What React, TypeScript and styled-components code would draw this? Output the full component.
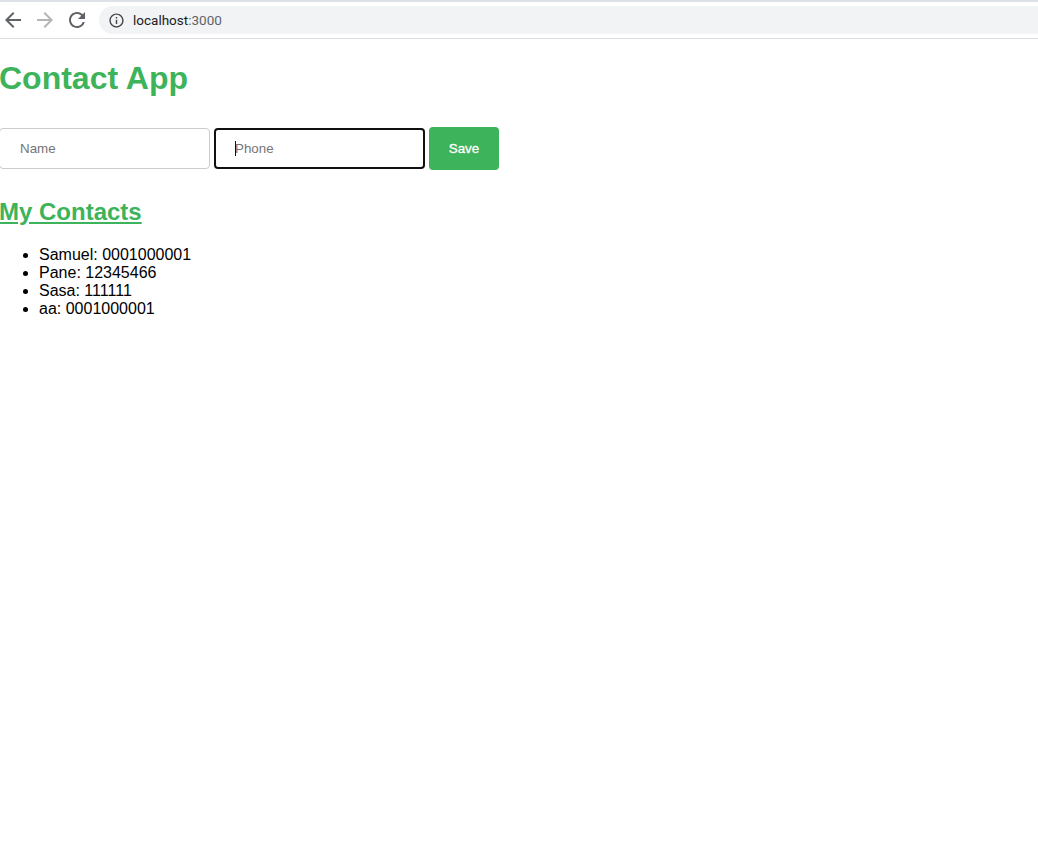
import React from 'react';
import styled, { createGlobalStyle } from 'styled-components';
import { MdArrowBack, MdArrowForward, MdRefresh, MdInfoOutline } from 'react-icons/md';

const GREEN = '#3db35b';

const GlobalStyle = createGlobalStyle`
  html, body {
    margin: 0;
    padding: 0;
    background: #ffffff;
    font-family: "Liberation Sans", Arial, sans-serif;
    overflow-x: hidden;
  }
`;

const TopStrip = styled.div`
  height: 2px;
  background: #dee1e6;
`;

const Toolbar = styled.div`
  height: 36px;
  display: flex;
  align-items: center;
  gap: 8px;
  border-bottom: 1px solid #dadce0;
  padding-left: 1px;
`;

const NavButton = styled.span<{ $disabled?: boolean }>`
  display: flex;
  color: ${(p) => (p.$disabled ? '#b3b5b8' : '#5f6368')};
`;

const Omnibox = styled.div`
  flex: 1;
  height: 28px;
  margin-left: 2px;
  display: flex;
  align-items: center;
  gap: 8px;
  padding-left: 9px;
  background: #f1f3f4;
  border-radius: 14px 0 0 14px;
  font-family: Roboto, sans-serif;
  font-size: 13.5px;
  color: #5f6368;
`;

const InfoIcon = styled.span`
  display: flex;
  color: #44474a;
`;

const Host = styled.span`
  color: #202124;
`;

const Page = styled.main`
  display: flex;
  flex-direction: column;
  align-items: flex-start;
  margin-left: -1px;
`;

const Title = styled.h1`
  margin: 21px 0 30px;
  font-size: 32px;
  line-height: 37px;
  font-weight: 700;
  color: ${GREEN};
`;

const Form = styled.form`
  display: flex;
  align-items: center;
  gap: 4px;
`;

const Field = styled.div`
  position: relative;
  display: flex;
`;

const Input = styled.input<{ $focused?: boolean }>`
  width: 211px;
  height: 41px;
  box-sizing: border-box;
  padding: 0 20px;
  border: 1px solid #ccc;
  border-radius: 4px;
  background: #fff;
  font-family: "Liberation Sans", Arial, sans-serif;
  font-size: 13.33px;
  outline: none;

  &::placeholder {
    color: #757575;
    opacity: 1;
  }

  ${(p) =>
    p.$focused &&
    `
    border: 2px solid #101010;
    padding: 0 19px;
  `}
`;

const Caret = styled.span`
  position: absolute;
  left: 21px;
  top: 13px;
  width: 1px;
  height: 15px;
  background: #101010;
`;

const SaveButton = styled.button`
  width: 70px;
  height: 43px;
  border: none;
  border-radius: 4px;
  background: ${GREEN};
  color: #fff;
  font-family: "Liberation Sans", Arial, sans-serif;
  font-size: 13.33px;
  font-weight: 400;
  -webkit-text-stroke: 0.3px #fff;
  cursor: pointer;
`;

const SubTitle = styled.h2`
  margin: 28px 0 20px;
  font-size: 24px;
  line-height: 28px;
  font-weight: 700;
  color: ${GREEN};
  text-decoration: underline;
`;

const ContactList = styled.ul`
  margin: 0;
  padding-left: 40px;
  font-size: 16px;
  line-height: 18px;
  color: #000;
`;

const contacts = [
  { name: 'Samuel', phone: '0001000001' },
  { name: 'Pane', phone: '12345466' },
  { name: 'Sasa', phone: '111111' },
  { name: 'aa', phone: '0001000001' },
];

const App: React.FC = () => {
  return (
    <>
      <GlobalStyle />
      <TopStrip />
      <Toolbar>
        <NavButton>
          <MdArrowBack size={24} />
        </NavButton>
        <NavButton $disabled>
          <MdArrowForward size={24} />
        </NavButton>
        <NavButton>
          <MdRefresh size={24} />
        </NavButton>
        <Omnibox>
          <InfoIcon>
            <MdInfoOutline size={17} />
          </InfoIcon>
          <span>
            <Host>localhost</Host>:3000
          </span>
        </Omnibox>
      </Toolbar>
      <Page>
        <Title>Contact App</Title>
        <Form onSubmit={(e) => e.preventDefault()}>
          <Field>
            <Input placeholder="Name" />
          </Field>
          <Field>
            <Input placeholder="Phone" $focused />
            <Caret />
          </Field>
          <SaveButton type="submit">Save</SaveButton>
        </Form>
        <SubTitle>My Contacts</SubTitle>
        <ContactList>
          {contacts.map((c) => (
            <li key={c.name}>
              {c.name}: {c.phone}
            </li>
          ))}
        </ContactList>
      </Page>
    </>
  );
};

export default App;
